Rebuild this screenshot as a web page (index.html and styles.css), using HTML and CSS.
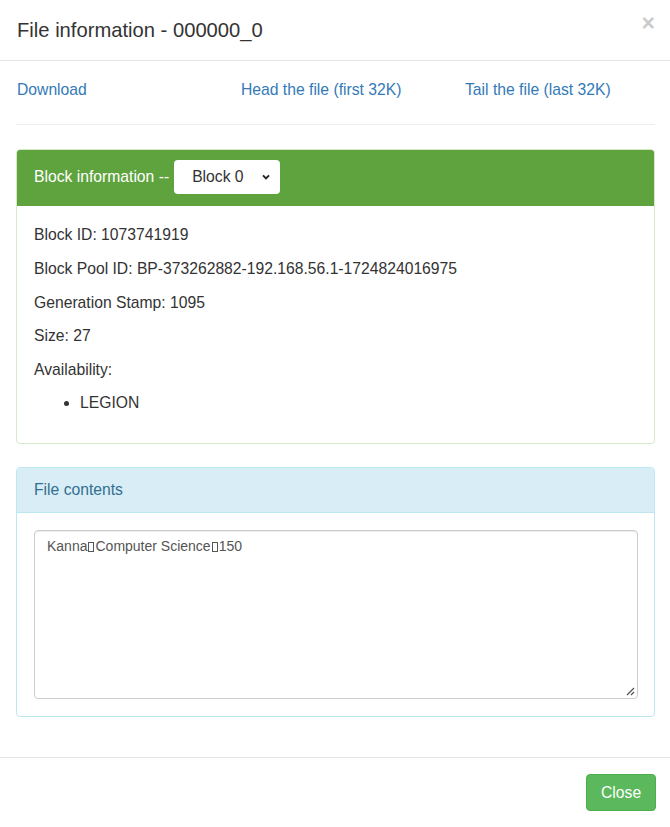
FILE: index.html
```html
<!DOCTYPE html>
<html>
<head>
<meta charset="utf-8">
<title>File information</title>
<link rel="stylesheet" href="styles.css">
</head>
<body>
<div class="modal">
  <div class="modal-header">
    <h4 class="modal-title">File information - 000000_0</h4>
    <span class="close">&times;</span>
  </div>
  <div class="modal-body">
    <div class="links">
      <a href="#">Download</a>
      <a href="#">Head the file (first 32K)</a>
      <a href="#">Tail the file (last 32K)</a>
    </div>
    <hr class="divider">
    <div class="panel panel-success">
      <div class="panel-heading">
        <span class="heading-label">Block information --</span>
        <span class="select">
          <span class="select-text">Block 0</span>
          <svg class="chevron" width="8" height="6" viewBox="0 0 8 6"><path d="M1 1.3 L4 4.3 L7 1.3" fill="none" stroke="#222" stroke-width="1.9"/></svg>
        </span>
      </div>
      <div class="panel-body">
        <p>Block ID: 1073741919</p>
        <p>Block Pool ID: BP-373262882-192.168.56.1-1724824016975</p>
        <p>Generation Stamp: 1095</p>
        <p>Size: 27</p>
        <p>Availability:</p>
        <ul>
          <li>LEGION</li>
        </ul>
      </div>
    </div>
    <div class="panel panel-info">
      <div class="panel-heading info-heading">File contents</div>
      <div class="panel-body contents-body">
        <div class="textarea">Kanna<span class="tofu"></span>Computer Science<span class="tofu"></span>150<svg class="grip" width="10" height="10" viewBox="0 0 10 10"><path d="M9 2 L2 9 M9 6 L6 9" stroke="#555" stroke-width="1.3" fill="none"/></svg></div>
      </div>
    </div>
  </div>
  <div class="modal-footer">
    <button class="btn-close" type="button">Close</button>
  </div>
</div>
</body>
</html>
```

FILE: styles.css
```css
html, body {
  margin: 0;
  padding: 0;
  background: #fff;
}

body {
  font-family: "Liberation Sans", Arial, Helvetica, sans-serif;
  font-size: 15.7px;
  line-height: 22.4px;
  color: #333;
}

.modal {
  width: 670px;
  height: 827px;
  display: flex;
  flex-direction: column;
}

.modal-header {
  display: flex;
  justify-content: space-between;
  align-items: flex-start;
  padding: 16px 15px 16px 17px;
  border-bottom: 1px solid #e5e5e5;
}

.modal-title {
  margin: 0;
  font-size: 20.2px;
  font-weight: normal;
  line-height: 28px;
  color: #333;
}

.close {
  font-size: 23px;
  font-weight: bold;
  line-height: 23px;
  color: #000;
  opacity: 0.2;
  margin-top: -4px;
}

.modal-body {
  flex: 1;
  padding: 18px 15px 0 16px;
}

.links {
  display: grid;
  grid-template-columns: 224px 224px 191px;
  padding-left: 1px;
}

.links a {
  color: #337ab7;
  text-decoration: none;
}

.divider {
  margin: 23px 0 24px;
  border: 0;
  border-top: 1px solid #eee;
  height: 0;
}

.panel {
  border: 1px solid #d6e9c6;
  border-radius: 4px;
  margin-bottom: 23px;
}

.panel-success .panel-heading {
  background: #5fa33e;
  color: #fff;
  padding: 10px 17px 11px;
  display: flex;
  align-items: center;
  border-bottom: 1px solid #5fa33e;
  border-radius: 3px 3px 0 0;
}

.heading-label {
  margin-right: 5px;
}

.select {
  display: flex;
  align-items: center;
  justify-content: space-between;
  box-sizing: border-box;
  width: 106px;
  height: 34px;
  background: #fff;
  border-radius: 4px;
  padding: 0 10px 0 18px;
  color: #333;
}

.chevron {
  display: block;
}

.panel-body {
  padding: 18px 17px 17px;
}

.panel-body p {
  margin: 0 0 11.2px;
}

.panel-body ul {
  margin: 0 0 11px;
  padding-left: 46px;
}

.panel-info {
  border-color: #bce8f1;
}

.info-heading {
  background: #d9edf7;
  color: #31708f;
  padding: 11px 17px;
  border-bottom: 1px solid #bce8f1;
  border-radius: 3px 3px 0 0;
}

.contents-body {
  padding: 17px 16px 17px 17px;
}

.textarea {
  position: relative;
  box-sizing: border-box;
  height: 169px;
  border: 1px solid #ccc;
  border-radius: 4px;
  padding: 5px 12px;
  font-size: 14px;
  line-height: 20px;
  color: #555;
  box-shadow: inset 0 1px 1px rgba(0,0,0,0.075);
}

.tofu {
  display: inline-block;
  box-sizing: border-box;
  width: 6px;
  height: 10px;
  border: 1px solid #555;
  margin: 0 1px;
  vertical-align: -0.5px;
}

.grip {
  position: absolute;
  right: 2px;
  bottom: 2px;
}

.modal-footer {
  display: flex;
  justify-content: flex-end;
  padding: 16px 14px 16px 16px;
  border-top: 1px solid #e5e5e5;
}

.btn-close {
  font-family: "Liberation Sans", Arial, Helvetica, sans-serif;
  font-size: 15.7px;
  line-height: 22px;
  color: #fff;
  background: #5cb85c;
  border: 1px solid #4cae4c;
  border-radius: 4px;
  padding: 6.5px 14px;
  height: 37px;
  width: 70px;
}
```
